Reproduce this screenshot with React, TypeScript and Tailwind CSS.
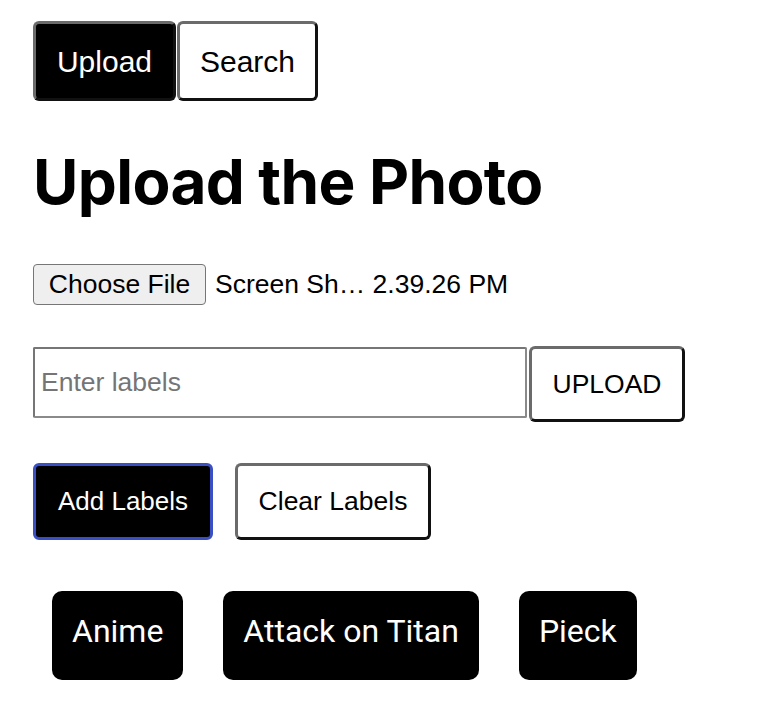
import * as React from 'react';

const labels = ["Anime", "Attack on Titan", "Pieck"];

export default function App() {
  return (
    <div className="min-h-screen bg-white px-[33px] pt-[21px] font-['Liberation_Sans',Arial,sans-serif] text-black">
      {/* Tabs */}
      <div className="flex items-start gap-px">
        <button className="h-[80px] w-[143px] rounded-[6px] border-[3px] border-t-[#6b6b6b] border-l-[#6b6b6b] border-b-[#111] border-r-[#111] bg-black text-[30px] text-white">
          Upload
        </button>
        <button className="h-[80px] w-[141px] rounded-[6px] border-[3px] border-t-[#6b6b6b] border-l-[#6b6b6b] border-b-[#111] border-r-[#111] bg-white text-[30px] text-black">
          Search
        </button>
      </div>

      <h1 className="mt-[44px] font-['Inter',sans-serif] text-[62px] font-bold leading-[1.2] tracking-[-0.01em]">
        Upload the Photo
      </h1>

      {/* File picker */}
      <div className="mt-[45px] flex items-center gap-[9px]">
        <button className="h-[41px] w-[173px] rounded-[4px] border border-[#767676] bg-[#efefef] text-[26.5px]">
          Choose File
        </button>
        <span className="text-[26.5px]">Screen Sh… 2.39.26 PM</span>
      </div>

      {/* Labels input */}
      <div className="mt-[41px] flex items-start gap-[2px]">
        <input
          placeholder="Enter labels"
          className="mt-px h-[71px] w-[494px] rounded-[2px] border-2 border-t-[#767676] border-l-[#767676] border-b-[#8a8a8a] border-r-[#8a8a8a] px-[6px] text-[26.5px] outline-none placeholder:text-[#757575]"
        />
        <button className="h-[76px] w-[156px] rounded-[6px] border-[3px] border-t-[#6b6b6b] border-l-[#6b6b6b] border-b-[#111] border-r-[#111] bg-white text-[26.5px]">
          UPLOAD
        </button>
      </div>

      {/* Label actions */}
      <div className="mt-[41px] flex items-start gap-[22px]">
        <button className="h-[77px] w-[180px] rounded-[6px] border-[3px] border-[#3b4fc4] bg-black text-[26px] text-white">
          Add Labels
        </button>
        <button className="h-[77px] w-[196px] rounded-[6px] border-[3px] border-t-[#6b6b6b] border-l-[#6b6b6b] border-b-[#111] border-r-[#111] bg-white text-[26.5px]">
          Clear Labels
        </button>
      </div>

      {/* Label tags */}
      <div className="ml-[19px] mt-[51px] flex gap-[40px]">
        {labels.map((label) => (
          <div
            key={label}
            className="flex h-[89px] items-center rounded-[10px] bg-black px-[20px] pb-[10px] font-['Roboto',sans-serif] text-[32px] text-white"
          >
            {label}
          </div>
        ))}
      </div>
    </div>
  );
}
